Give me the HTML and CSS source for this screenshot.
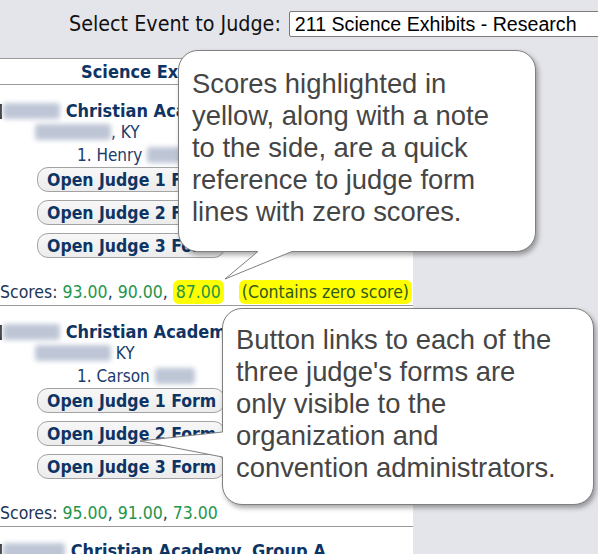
FILE: index.html
```html
<!DOCTYPE html>
<html>
<head>
<meta charset="utf-8">
<link rel="stylesheet" href="styles.css">
</head>
<body>
<div class="topbar">
  <span class="sel-label">Select Event to Judge:</span>
  <div class="select">211 Science Exhibits - Research</div>
</div>
<div class="panel">
  <div class="panel-head">Science Exhibits - Research</div>
  <div class="entry">
    <div class="title"><span class="mark"></span><span class="blur bw1"></span> Christian Academy, Group A</div>
    <div class="loc"><span class="blur bw2"></span>, KY</div>
    <div class="judge">1. Henry <span class="blur bw3"></span></div>
    <div class="btns">
      <button class="jbtn">Open Judge 1 Form</button>
      <button class="jbtn">Open Judge 2 Form</button>
      <button class="jbtn">Open Judge 3 Form</button>
    </div>
    <div class="scores">Scores: <span class="g">93.00</span>, <span class="g">90.00</span>, <span class="g hl">87.00</span> <span class="hl note">(Contains zero score)</span></div>
  </div>
  <div class="entry">
    <div class="title"><span class="mark"></span><span class="blur bw1"></span> Christian Academy, Group A</div>
    <div class="loc"><span class="blur bw2"></span> KY</div>
    <div class="judge">1. Carson <span class="blur bw4"></span></div>
    <div class="btns">
      <button class="jbtn">Open Judge 1 Form</button>
      <button class="jbtn">Open Judge 2 Form</button>
      <button class="jbtn">Open Judge 3 Form</button>
    </div>
    <div class="scores">Scores: <span class="g">95.00</span>, <span class="g">91.00</span>, <span class="g">73.00</span></div>
  </div>
  <div class="entry last">
    <div class="title"><span class="mark"></span><span class="blur bw5"></span> Christian Academy, Group A</div>
  </div>
</div>

<div class="bubble b1">
  Scores highlighted in<br>yellow, along with a note<br>to the side, are a quick<br>reference to judge form<br>lines with zero scores.
  <svg class="tail tail1" width="1" height="1" viewBox="0 0 1 1">
    <polygon points="79,-2 79,0.5 46,28 113,0.5 113,-2" fill="#fff"/>
    <polyline points="79,0.5 46,28 113,0.5" fill="none" stroke="#7f7f7f" stroke-width="1"/>
  </svg>
</div>

<div class="bubble b2">
  Button links to each of the<br>three judge's forms are<br>only visible to the<br>organization and<br>convention administrators.
  <svg class="tail tail2" width="1" height="1" viewBox="0 0 1 1">
    <polygon points="2,123 -0.5,123 -83,132 -0.5,148 2,148" fill="#fff"/>
    <polyline points="-0.5,123 -83,132 -0.5,148" fill="none" stroke="#7f7f7f" stroke-width="1"/>
  </svg>
</div>
</body>
</html>
```
FILE: styles.css
```css
body {
  margin: 0;
  width: 598px;
  height: 554px;
  overflow: hidden;
  position: relative;
  background: #e4e5ea;
  font-family: "DejaVu Sans Condensed", "DejaVu Sans", sans-serif;
  color: #0e3464;
}

.topbar {
  height: 58px;
  box-sizing: border-box;
  display: flex;
  align-items: flex-start;
  gap: 8px;
  padding: 11px 0 0 69px;
}

.sel-label {
  font-size: 21.3px;
  line-height: 26px;
  color: #111;
  white-space: nowrap;
}

.select {
  flex-shrink: 0;
  width: 330px;
  height: 26px;
  box-sizing: border-box;
  border: 1px solid #7a7a7a;
  border-radius: 2px;
  background: #fff;
  font-family: "Liberation Sans", Arial, sans-serif;
  font-size: 19.6px;
  line-height: 24px;
  padding-left: 5px;
  color: #000;
  white-space: nowrap;
}

.panel {
  width: 413px;
  background: #fff;
  border-top: 1px solid #9a9a9a;
  min-height: 500px;
}

.panel-head {
  height: 25px;
  line-height: 25px;
  border-bottom: 1px solid #9a9a9a;
  text-align: center;
  font-weight: bold;
  font-size: 18px;
  color: #0e3464;
  white-space: nowrap;
}

.entry {
  padding: 16px 0 3px 0;
  border-bottom: 1px solid #9a9a9a;
}

.entry.last {
  border-bottom: none;
  padding-top: 14px;
}

.title {
  font-weight: bold;
  font-size: 18px;
  line-height: 20px;
  white-space: nowrap;
  color: #0e3464;
}

.mark {
  display: inline-block;
  width: 2px;
  height: 15px;
  background: #333;
  vertical-align: -2px;
  margin-right: 1px;
}

.blur {
  display: inline-block;
  height: 16px;
  background: #bec6d6;
  filter: blur(2.5px);
  vertical-align: -2px;
  border-radius: 3px;
}

.bw1 { width: 57px; }
.bw2 { width: 76px; }
.bw3 { width: 40px; }
.bw4 { width: 40px; }
.bw5 { width: 62px; }

.loc {
  margin-top: 1px;
  padding-left: 35px;
  font-size: 17px;
  line-height: 20px;
  color: #1b3b6b;
}

.judge {
  margin-top: 3px;
  padding-left: 77px;
  font-size: 17px;
  line-height: 20px;
  color: #1b3b6b;
  white-space: nowrap;
}

.btns {
  margin-top: 2px;
  display: flex;
  flex-direction: column;
  align-items: flex-start;
  gap: 8px;
  padding-left: 37px;
}

.jbtn {
  width: 188px;
  height: 25px;
  box-sizing: border-box;
  border: 1px solid #a3a3a3;
  border-radius: 11px;
  background: linear-gradient(#f7f7f7, #ececec);
  font-family: "DejaVu Sans Condensed", "DejaVu Sans", sans-serif;
  font-weight: bold;
  font-size: 17.5px;
  color: #0e3464;
  text-align: left;
  padding: 0 0 0 9px;
  white-space: nowrap;
  overflow: hidden;
}

.scores {
  margin-top: 24px;
  font-size: 17.5px;
  line-height: 20px;
  color: #1d3557;
  white-space: nowrap;
}

.g { color: #23964a; }

.hl {
  background: #ffff00;
  border-radius: 6px;
  padding: 2px 3px;
}

.note {
  margin-left: 10px;
  color: #2f5a1c;
}

.bubble {
  position: absolute;
  box-sizing: border-box;
  background: #fff;
  border: 1px solid #7f7f7f;
  border-radius: 20px;
  box-shadow: 2px 3px 5px rgba(0, 0, 0, 0.35);
  font-family: "Liberation Sans", Arial, sans-serif;
  font-size: 27.4px;
  line-height: 32px;
  color: #454545;
  white-space: nowrap;
}

.b1 {
  left: 178px;
  top: 50px;
  width: 358px;
  height: 202px;
  padding: 17px 0 0 13px;
}

.b2 {
  left: 222px;
  top: 308px;
  width: 372px;
  height: 197px;
  padding: 15px 0 0 13px;
}

.tail {
  position: absolute;
  overflow: visible;
}

.tail1 {
  left: 0;
  top: 100%;
}

.tail2 {
  left: 0;
  top: 0;
}
```
